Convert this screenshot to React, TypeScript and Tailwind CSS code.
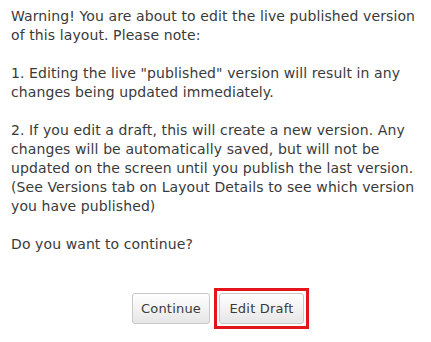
import React from "react";

export default function App() {
  const font = { fontFamily: '"DejaVu Sans", Verdana, sans-serif' };
  return (
    <div className="w-[431px] h-[342px] bg-white overflow-hidden" style={font}>
      <div className="pl-[11px] pt-[7px] text-[14px] tracking-[0.1px] leading-[19px] text-[#3a3a3a] whitespace-nowrap">
        <p>
          Warning! You are about to edit the live published version
          <br />
          of this layout. Please note:
        </p>
        <p className="mt-[19px]">
          1. Editing the live "published" version will result in any
          <br />
          changes being updated immediately.
        </p>
        <p className="mt-[19px]">
          2. If you edit a draft, this will create a new version. Any
          <br />
          changes will be automatically saved, but will not be
          <br />
          updated on the screen until you publish the last version.
          <br />
          (See Versions tab on Layout Details to see which version
          <br />
          you have published)
        </p>
        <p className="mt-[19px]">Do you want to continue?</p>
      </div>
      <div className="flex pl-[132px] mt-[34px] items-center">
        <button className="w-[78px] h-[31px] border border-[#c8c8c8] rounded-[3px] bg-gradient-to-b from-[#ffffff] to-[#e6e6e6] text-[13px] tracking-[0.2px] text-[#3a3a3a]">
          Continue
        </button>
        <div className="ml-[4px] border-[3px] border-[#e3141b] p-[2px]">
          <button className="block w-[85px] h-[31px] border border-[#c8c8c8] rounded-[3px] bg-gradient-to-b from-[#ffffff] to-[#e6e6e6] text-[13px] tracking-[0.2px] text-[#3a3a3a]">
            Edit Draft
          </button>
        </div>
      </div>
    </div>
  );
}
